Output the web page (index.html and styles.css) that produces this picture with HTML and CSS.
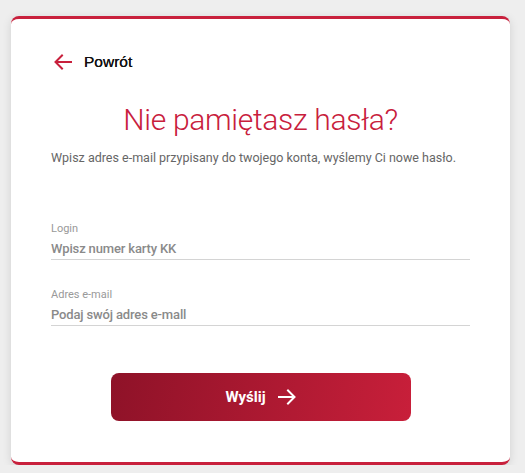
FILE: index.html
```html
<!DOCTYPE html>
<html lang="pl">
<head>
<meta charset="utf-8">
<title>Nie pamiętasz hasła?</title>
<link rel="stylesheet" href="styles.css">
</head>
<body>
<div class="card">
  <a class="back" href="#">
    <svg class="back-icon" width="18" height="16" viewBox="0 0 18 16" fill="none" stroke="#c8203c" stroke-width="2" stroke-linecap="square">
      <path d="M17 8H2"/>
      <path d="M8 1.5L1.5 8L8 14.5"/>
    </svg>
    <span>Powrót</span>
  </a>
  <h1 class="title">Nie pamiętasz hasła?</h1>
  <p class="lead">Wpisz adres e-mail przypisany do twojego konta, wyślemy Ci nowe hasło.</p>
  <div class="field first">
    <label class="label">Login</label>
    <div class="input">Wpisz numer karty KK</div>
  </div>
  <div class="field">
    <label class="label">Adres e-mail</label>
    <div class="input">Podaj swój adres e-mall</div>
  </div>
  <div class="actions">
    <button class="btn">
      <span>Wyślij</span>
      <svg width="18" height="16" viewBox="0 0 18 16" fill="none" stroke="#fff" stroke-width="2" stroke-linecap="square">
        <path d="M1 8H16"/>
        <path d="M10 1.5L16.5 8L10 14.5"/>
      </svg>
    </button>
  </div>
</div>
</body>
</html>
```
FILE: styles.css
```css
html, body {
  margin: 0;
  padding: 0;
  background: #eeeeee;
}
body {
  padding: 16px 0 0 11px;
  font-family: Roboto, "Liberation Sans", sans-serif;
}
.card {
  box-sizing: border-box;
  width: 499px;
  height: 449px;
  background: #fff;
  border-top: 3px solid #c8203c;
  border-bottom: 3px solid #c8203c;
  border-radius: 8px;
  box-shadow: 0 2px 10px rgba(0,0,0,0.12);
  padding: 33px 40px 0 40px;
}
.back {
  display: flex;
  align-items: center;
  gap: 12px;
  height: 20px;
  text-decoration: none;
  color: #111;
  font-family: "Liberation Sans", Arial, sans-serif;
  font-size: 15.5px;
  text-shadow: 0 0 0.2px #111;
  margin-left: 3px;
}
.back-icon { display: block; }
.title {
  margin: 30px 0 0 0;
  text-align: center;
  font-size: 30px;
  line-height: 36px;
  font-weight: 300;
  color: #c8203c;
  letter-spacing: -0.3px;
}
.lead {
  margin: 12px 0 0 0;
  font-size: 12.5px;
  line-height: 16px;
  letter-spacing: 0;
  color: #666;
  white-space: nowrap;
}
.field {
  width: 419px;
  border-bottom: 1px solid #d4d4d4;
  padding-bottom: 2px;
}
.field.first { margin-top: 56px; }
.field + .field { margin-top: 28px; }
.label {
  display: block;
  font-size: 11px;
  line-height: 14px;
  color: #999;
}
.input {
  margin-top: 5px;
  font-size: 13px;
  line-height: 16px;
  letter-spacing: -0.15px;
  color: #8a8a8a;
  font-weight: 500;
}
.actions {
  display: flex;
  justify-content: center;
  margin-top: 47px;
}
.btn {
  width: 300px;
  height: 48px;
  border: none;
  border-radius: 8px;
  background: linear-gradient(100deg, #8e1228 0%, #c81f3a 100%);
  color: #fff;
  font-family: Roboto, "Liberation Sans", sans-serif;
  font-size: 15px;
  font-weight: 700;
  display: flex;
  align-items: center;
  justify-content: center;
  gap: 12px;
  padding: 0;
  cursor: pointer;
}
.btn svg { display: block; }
```
